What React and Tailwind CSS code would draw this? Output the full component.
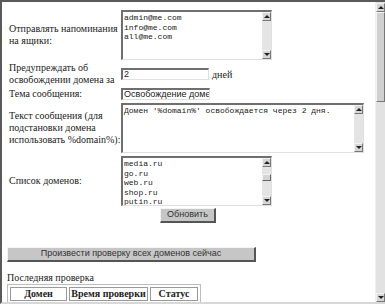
import React from "react";

const serif = "font-['Liberation_Serif','Times_New_Roman',serif]";
const sans = "font-['Liberation_Sans',Arial,sans-serif]";
const mono = "font-['Liberation_Mono','Courier_New',monospace]";

function Arrow({ up }) {
  return (
    <div className="flex h-[9px] w-[9px] shrink-0 items-center justify-center border-t border-l border-[#f2f2f2] border-r border-b border-r-[#777] border-b-[#777] bg-[#d6d6d6]">
      {up ? (
        <div className="h-0 w-0 border-x-[3px] border-b-[3px] border-x-transparent border-b-[#222]" />
      ) : (
        <div className="h-0 w-0 border-x-[3px] border-t-[3px] border-x-transparent border-t-[#222]" />
      )}
    </div>
  );
}

function MiniScroll({ thumb }) {
  return (
    <div className="flex w-[9px] shrink-0 flex-col bg-[#e4e4e4]">
      <Arrow up />
      <div className="flex-1">
        {thumb && (
          <div className="mt-[7px] h-[7px] border-t border-l border-[#f4f4f4] border-r border-b border-r-[#666] border-b-[#666] bg-[#d4d4d4]" />
        )}
      </div>
      <Arrow />
    </div>
  );
}

function Area({ lines, className, thumb }) {
  return (
    <div className={`flex border-t-2 border-l-2 border-[#6f6f6f] border-r border-b border-r-[#e0e0e0] border-b-[#e0e0e0] bg-white ${className}`}>
      <div className={`flex-1 overflow-hidden pl-[1px] pt-[1px] text-[8px] leading-[9.5px] text-[#222] ${mono}`}>
        {lines.map((l) => (
          <div key={l} className="whitespace-pre">{l}</div>
        ))}
      </div>
      <MiniScroll thumb={thumb} />
    </div>
  );
}

function Field({ value, className }) {
  return (
    <div className={`h-[12px] overflow-hidden whitespace-nowrap border-t-2 border-l-2 border-[#6f6f6f] border-r border-b border-r-[#e0e0e0] border-b-[#e0e0e0] bg-white pl-[1px] text-[9px] leading-[9px] text-[#222] ${sans} ${className}`}>
      {value}
    </div>
  );
}

function Row({ label, children, className }) {
  return (
    <div className={`flex items-center ${className}`}>
      <div className={`w-[114px] shrink-0 whitespace-nowrap pl-[2px] text-[10px] leading-[12px] text-[#222] ${serif}`}>{label}</div>
      {children}
    </div>
  );
}

const btn =
  "flex items-center justify-center border-t border-l border-[#f4f4f4] border-r-2 border-b-2 border-r-[#555] border-b-[#555] bg-[#c6c6c6] text-[9px] text-[#333]";

export default function App() {
  return (
    <div className="flex h-[304px] w-[385px] overflow-hidden border-t-2 border-l-2 border-b-2 border-t-[#5a5a5a] border-l-[#5a5a5a] border-b-[#d8d8d8] bg-white">
      <div className="flex-1 overflow-hidden pl-[5px] pt-[8px]">
        <Row label={<>Отправлять напоминания<br />на ящики:</>}>
          <Area className="h-[50px] w-[151px]" lines={["admin@me.com", "info@me.com", "all@me.com"]} />
        </Row>

        <Row className="mt-[1px] h-[26px]" label={<>Предупреждать об<br />освобождении домена за</>}>
          <Field value="2" className="w-[88px]" />
          <span className={`ml-[3px] text-[10px] text-[#222] ${serif}`}>дней</span>
        </Row>

        <Row className="mt-[1px] h-[12px]" label="Тема сообщения:">
          <Field value="Освобождение домена" className="w-[89px]" />
        </Row>

        <Row className="mt-[3px]" label={<>Текст сообщения (для<br />подстановки домена<br />использовать %domain%):</>}>
          <Area className="h-[50px] w-[243px]" lines={["Домен '%domain%' освобождается через 2 дня."]} />
        </Row>

        <Row className="mt-[3px]" label="Список доменов:">
          <Area className="h-[50px] w-[151px]" thumb lines={["media.ru", "go.ru", "web.ru", "shop.ru", "putin.ru"]} />
        </Row>

        <div className="mt-[2px] flex w-[362px] justify-center">
          <div className={`${btn} h-[15px] w-[56px] ${sans}`}>Обновить</div>
        </div>

        <div className={`${btn} mt-[24px] h-[15px] w-[249px] ${sans}`}>Произвести проверку всех доменов сейчас</div>

        <div className={`mt-[10px] text-[10px] leading-[12px] text-[#222] ${serif}`}>Последняя проверка</div>

        <table className={`border-separate border-spacing-[2px] border border-[#bdbdbd] text-[10px] text-[#222] ${serif}`}>
          <thead>
            <tr>
              <th className="h-[14px] w-[57px] border border-[#9a9a9a] p-0 font-bold leading-[12px]">Домен</th>
              <th className="w-[79px] border border-[#9a9a9a] p-0 font-bold leading-[12px]">Время проверки</th>
              <th className="w-[48px] border border-[#9a9a9a] p-0 font-bold leading-[12px]">Статус</th>
            </tr>
          </thead>
          <tbody>
            <tr className="text-[8px] text-[#777]">
              <td className="border border-[#9a9a9a] p-0 text-center">media.ru</td>
              <td className="border border-[#9a9a9a] p-0 text-center">2005.05.31 14:44:24</td>
              <td className="border border-[#9a9a9a] p-0 text-center">2005.06.01</td>
            </tr>
          </tbody>
        </table>
      </div>

      <div className="flex w-[10px] shrink-0 flex-col border-l border-[#f0f0f0] bg-[#e2e2e2] pt-[1px]">
        <Arrow up />
        <div className="h-[90px] border-t border-l border-[#f4f4f4] border-r border-b border-r-[#777] border-b-[#777] bg-[#d0d0d0]" />
        <div className="flex-1" />
        <Arrow />
      </div>
    </div>
  );
}
